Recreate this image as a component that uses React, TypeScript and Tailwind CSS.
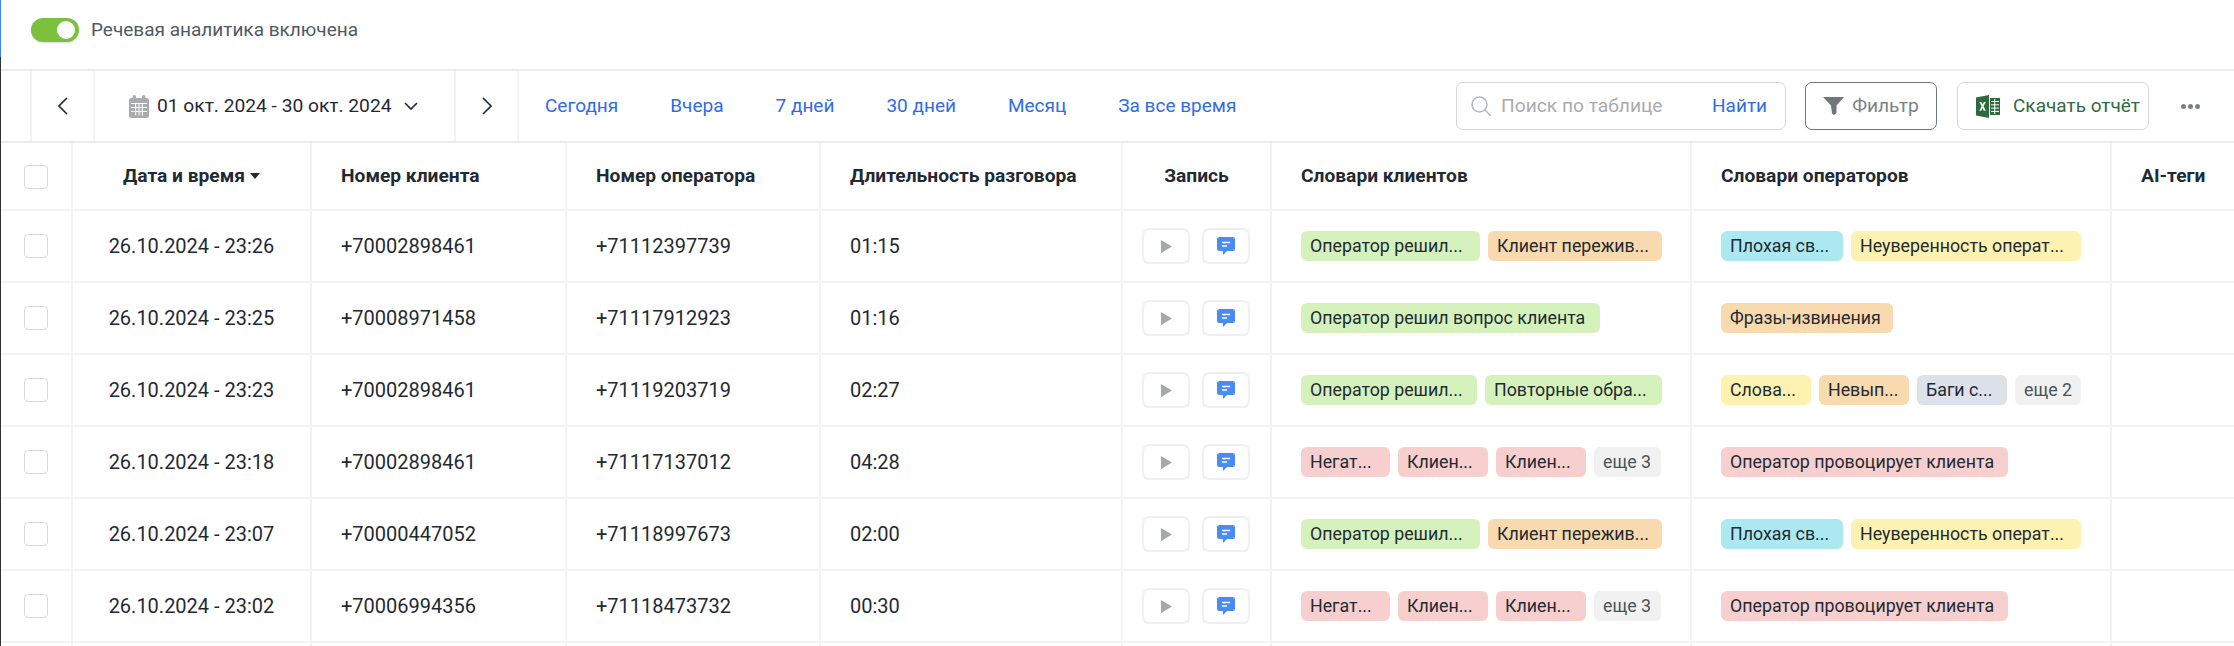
import React from "react";

const GRID = "grid grid-cols-[72px_239px_255px_254px_302px_149px_420px_420px_1fr]";
const CELL = "border-r-2 border-[#f3f3f3] flex items-center";

type Tag = { t: string; c: string; w: string };
const G = "bg-[#d5f2bc]", O = "bg-[#f9d9ae]", B = "bg-[#abe8f1]", Y = "bg-[#fdf2b0]", S = "bg-[#dde1ea]", R = "bg-[#f7cfce]", M = "bg-[#f1f1f2] text-[#4a545c]";

const clientA: Tag[] = [
  { t: "Оператор решил...", c: G, w: "w-[179px]" },
  { t: "Клиент пережив...", c: O, w: "w-[174px]" },
];
const opA: Tag[] = [
  { t: "Плохая св...", c: B, w: "w-[122px]" },
  { t: "Неуверенность операт...", c: Y, w: "w-[230px]" },
];
const clientNeg: Tag[] = [
  { t: "Негат...", c: R, w: "w-[89px]" },
  { t: "Клиен...", c: R, w: "w-[90px]" },
  { t: "Клиен...", c: R, w: "w-[90px]" },
  { t: "еще 3", c: M, w: "w-[67px]" },
];
const opProv: Tag[] = [{ t: "Оператор провоцирует клиента", c: R, w: "w-[287px]" }];

const rows: { d: string; c: string; o: string; l: string; a: Tag[]; b: Tag[] }[] = [
  { d: "26.10.2024 - 23:26", c: "+70002898461", o: "+71112397739", l: "01:15", a: clientA, b: opA },
  {
    d: "26.10.2024 - 23:25", c: "+70008971458", o: "+71117912923", l: "01:16",
    a: [{ t: "Оператор решил вопрос клиента", c: G, w: "w-[299px]" }],
    b: [{ t: "Фразы-извинения", c: O, w: "w-[172px]" }],
  },
  {
    d: "26.10.2024 - 23:23", c: "+70002898461", o: "+71119203719", l: "02:27",
    a: [
      { t: "Оператор решил...", c: G, w: "w-[176px]" },
      { t: "Повторные обра...", c: G, w: "w-[177px]" },
    ],
    b: [
      { t: "Слова...", c: Y, w: "w-[90px]" },
      { t: "Невып...", c: O, w: "w-[90px]" },
      { t: "Баги с...", c: S, w: "w-[90px]" },
      { t: "еще 2", c: M, w: "w-[66px]" },
    ],
  },
  { d: "26.10.2024 - 23:18", c: "+70002898461", o: "+71117137012", l: "04:28", a: clientNeg, b: opProv },
  { d: "26.10.2024 - 23:07", c: "+70000447052", o: "+71118997673", l: "02:00", a: clientA, b: opA },
  { d: "26.10.2024 - 23:02", c: "+70006994356", o: "+71118473732", l: "00:30", a: clientNeg, b: opProv },
];

function Checkbox() {
  return <span className="block w-6 h-6 rounded-[4px] border border-[#d9d9d9] bg-white" />;
}

function Tags({ items }: { items: Tag[] }) {
  return (
    <div className="flex gap-2">
      {items.map((x, i) => (
        <span
          key={i}
          className={`${x.c} ${x.w} h-[30px] leading-[30px] rounded-[6px] px-[9px] text-[17.8px] whitespace-nowrap overflow-hidden`}
        >
          {x.t}
        </span>
      ))}
    </div>
  );
}

function Calendar() {
  return (
    <svg width="20" height="23" viewBox="0 0 20 23" fill="none">
      <rect x="0" y="3" width="20" height="20" rx="2.5" fill="#a8acae" />
      <rect x="3.5" y="0" width="3.5" height="6" rx="1.75" fill="#a8acae" />
      <rect x="13" y="0" width="3.5" height="6" rx="1.75" fill="#a8acae" />
      <path d="M2 8.5h16M2 12.5h16M2 16.5h16M6.7 8.5v12M10 8.5v12M13.3 8.5v12" stroke="#fff" strokeWidth="1" />
    </svg>
  );
}

function Excel() {
  return (
    <svg width="24" height="23" viewBox="0 0 24 23" fill="none">
      <path d="M0 2.5 13 0v23L0 20.5z" fill="#2d6a3e" />
      <path d="M3.4 7h2l1.2 2.6L7.9 7h1.9l-2.2 4.3 2.3 4.5H7.8l-1.3-2.8-1.3 2.8H3.3l2.3-4.5z" fill="#fff" />
      <rect x="14" y="3" width="10" height="17" fill="#2d6a3e" />
      <path d="M15 6.5h8M15 9.8h8M15 13.1h8M15 16.4h8M18.7 4v15" stroke="#fff" strokeWidth="1" />
    </svg>
  );
}

function Chevron({ d }: { d: string }) {
  return (
    <svg width="10" height="18" viewBox="0 0 10 18" fill="none">
      <path d={d} stroke="#1f2a33" strokeWidth="1.6" />
    </svg>
  );
}

function Row({ r }: { r: (typeof rows)[number] }) {
  return (
    <div className={`${GRID} h-[72px] border-b-2 border-[#f3f3f3] text-[20px] text-[#1f2a33]`}>
      <div className={`${CELL} justify-center`}><Checkbox /></div>
      <div className={`${CELL} justify-center`}>{r.d}</div>
      <div className={`${CELL} pl-[29px]`}>{r.c}</div>
      <div className={`${CELL} pl-[29px]`}>{r.o}</div>
      <div className={`${CELL} pl-[29px]`}>{r.l}</div>
      <div className={`${CELL} pl-[19px] gap-3`}>
        <span className="w-12 h-9 rounded-[7px] border-2 border-[#f0f0f0] flex items-center justify-center">
          <svg width="11" height="13" viewBox="0 0 11 13"><path d="M0 0l11 6.5L0 13z" fill="#a3a8aa" /></svg>
        </span>
        <span className="w-12 h-9 rounded-[7px] border-2 border-[#f0f0f0] flex items-center justify-center">
          <svg width="18" height="18" viewBox="0 0 18 18">
            <path d="M2.5 0h13A2.5 2.5 0 0 1 18 2.5v9a2.5 2.5 0 0 1-2.5 2.5H10l-4 4v-4H2.5A2.5 2.5 0 0 1 0 11.5v-9A2.5 2.5 0 0 1 2.5 0z" fill="#4a8bf5" />
            <path d="M5 5.5h8M5 9h5" stroke="#fff" strokeWidth="1.3" />
          </svg>
        </span>
      </div>
      <div className={`${CELL} pl-[29px]`}><Tags items={r.a} /></div>
      <div className={`${CELL} pl-[29px]`}><Tags items={r.b} /></div>
      <div />
    </div>
  );
}

export default function App() {
  const link = "text-[#2f6bed] text-[19px]";
  return (
    <div className="flex w-[2234px] h-[646px] overflow-hidden bg-white font-['Roboto',sans-serif] text-[19.2px]">
      <div className="w-px flex flex-col shrink-0">
        <div className="h-[57px] bg-[#3b82f6]" />
        <div className="flex-1 bg-[#2f3136]" />
      </div>
      <div className="flex-1 flex flex-col min-w-0">
        <div className="h-[71px] pt-[18px] pl-[30px] flex items-start gap-3 border-b-2 border-[#ececec]">
          <span className="w-12 h-6 rounded-full bg-[#7cc13d] flex items-center justify-end pr-[4px] shadow-[0_1px_2px_rgba(0,0,0,0.15)]">
            <span className="w-[18px] h-[18px] rounded-full bg-white" />
          </span>
          <span className="text-[19px] leading-6 text-[#4f5a62]">Речевая аналитика включена</span>
        </div>

        <div className="h-[72px] flex items-center border-b-2 border-[#ececec] text-[#1f2a33]">
          <div className="w-[31px] h-full border-r-2 border-[#f3f3f3]" />
          <div className="w-[63px] h-full border-r-2 border-[#f3f3f3] flex items-center justify-center">
            <Chevron d="M9 1 1 9l8 8" />
          </div>
          <div className="w-[361px] h-full border-r-2 border-[#f3f3f3] flex items-center pl-[34px] gap-2">
            <Calendar />
            <span>01 окт. 2024 - 30 окт. 2024</span>
            <svg width="14" height="9" viewBox="0 0 14 9" fill="none" className="ml-[5px]"><path d="m1 1 6 6 6-6" stroke="#1f2a33" strokeWidth="1.6" /></svg>
          </div>
          <div className="w-[63px] h-full border-r-2 border-[#f3f3f3] flex items-center justify-center">
            <Chevron d="m1 1 8 8-8 8" />
          </div>
          <div className="flex items-center gap-[52px] pl-[26px]">
            <span className={link}>Сегодня</span>
            <span className={link}>Вчера</span>
            <span className={link}>7 дней</span>
            <span className={link}>30 дней</span>
            <span className={link}>Месяц</span>
            <span className={link}>За все время</span>
          </div>
          <div className="ml-auto flex items-center pr-[34px]">
            <div className="w-[330px] h-12 rounded-[7px] border border-[#d5d7d9] flex items-center pl-[14px] pr-[18px]">
              <svg width="21" height="20" viewBox="0 0 21 20" fill="none">
                <circle cx="8.5" cy="8.5" r="7.5" stroke="#b4b8ba" strokeWidth="1.5" />
                <path d="m14 14 6 6" stroke="#b4b8ba" strokeWidth="1.5" />
              </svg>
              <span className="ml-[9px] text-[#a8acae]">Поиск по таблице</span>
              <span className={`ml-auto ${link}`}>Найти</span>
            </div>
            <div className="ml-[19px] w-[132px] h-12 rounded-[7px] border border-[#6f777b] flex items-center justify-center gap-2 text-[#7b8387]">
              <svg width="21" height="18" viewBox="0 0 21 18"><path d="M0 0h21l-7.5 8.5V16l-2.5 2-2-1.5-1-8z" fill="#6f777b" /></svg>
              <span>Фильтр</span>
            </div>
            <div className="ml-5 w-[192px] h-12 rounded-[7px] border border-[#d5d7d9] flex items-center pl-[18px] gap-[13px] text-[19px] text-[#2f6b43]">
              <Excel />
              <span>Скачать отчёт</span>
            </div>
            <div className="ml-[32px] flex gap-[2px]">
              <span className="w-[5px] h-[5px] rounded-full bg-[#7b8387]" />
              <span className="w-[5px] h-[5px] rounded-full bg-[#7b8387]" />
              <span className="w-[5px] h-[5px] rounded-full bg-[#7b8387]" />
            </div>
          </div>
        </div>

        <div className={`${GRID} h-[68px] border-b-2 border-[#f3f3f3] font-bold text-[19.2px] text-[#1f2a33]`}>
          <div className={`${CELL} justify-center pt-[2px]`}><Checkbox /></div>
          <div className={`${CELL} justify-center gap-[5px]`}>
            Дата и время
            <svg width="10" height="6" viewBox="0 0 10 6"><path d="M0 0h10L5 6z" fill="#1f2a33" /></svg>
          </div>
          <div className={`${CELL} pl-[29px]`}>Номер клиента</div>
          <div className={`${CELL} pl-[29px]`}>Номер оператора</div>
          <div className={`${CELL} pl-[29px]`}>Длительность разговора</div>
          <div className={`${CELL} justify-center`}>Запись</div>
          <div className={`${CELL} pl-[29px]`}>Словари клиентов</div>
          <div className={`${CELL} pl-[29px]`}>Словари операторов</div>
          <div className="flex items-center pl-[29px]">AI-теги</div>
        </div>

        {rows.map((r, i) => <Row key={i} r={r} />)}
        <div className={`${GRID} flex-1`}>
          <div className={CELL} /><div className={CELL} /><div className={CELL} /><div className={CELL} />
          <div className={CELL} /><div className={CELL} /><div className={CELL} /><div className={CELL} /><div />
        </div>
      </div>
    </div>
  );
}
